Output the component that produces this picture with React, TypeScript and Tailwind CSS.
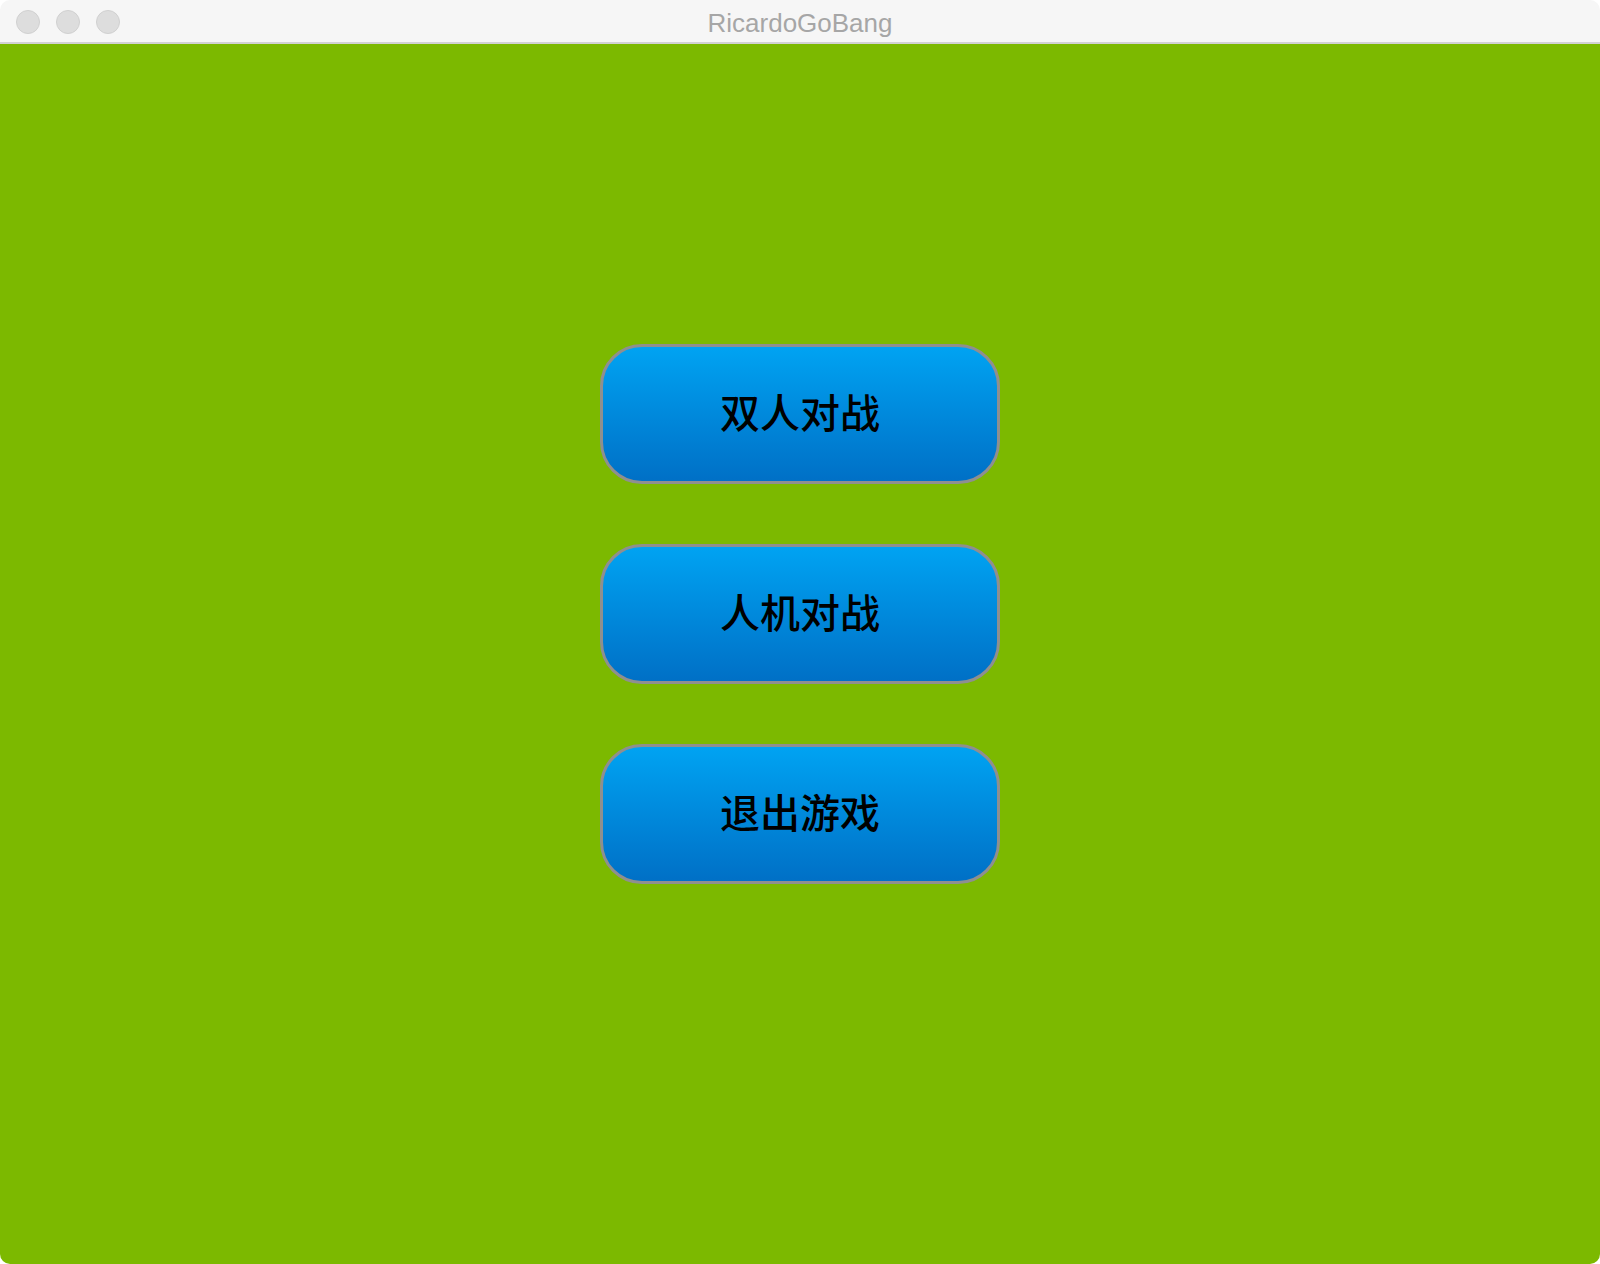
const buttons = ['双人对战', '人机对战', '退出游戏'];

export default function App() {
  return (
    <div className="w-[1600px] h-[1264px] bg-white">
      <div className="flex flex-col h-full rounded-[10px] overflow-hidden">
        {/* title bar */}
        <div className="relative h-[44px] shrink-0 bg-[#f6f6f6] border-b-2 border-[#d2d2d2] flex items-center justify-center">
          <div className="absolute left-[16px] top-[10px] flex gap-[16px]">
            <div className="w-[24px] h-[24px] rounded-full bg-[#dddddd] border border-[#d0d0d0]" />
            <div className="w-[24px] h-[24px] rounded-full bg-[#dddddd] border border-[#d0d0d0]" />
            <div className="w-[24px] h-[24px] rounded-full bg-[#dddddd] border border-[#d0d0d0]" />
          </div>
          <span className="pt-[4px] text-[26px] leading-none text-[#a6a6a6] font-['Liberation_Sans',Arial,sans-serif]">
            RicardoGoBang
          </span>
        </div>

        {/* content */}
        <div className="flex-1 bg-[#7cb900] flex flex-col items-center pt-[300px] gap-[60px]">
          {buttons.map((label) => (
            <button
              key={label}
              className="w-[400px] h-[140px] pb-[6px] rounded-[42px] border-[3px] border-[#8f8f8f] bg-gradient-to-b from-[#00a3f2] to-[#0070c6] flex items-center justify-center text-black text-[40px] leading-none font-medium font-['Noto_Sans_CJK_SC',sans-serif]"
            >
              {label}
            </button>
          ))}
        </div>
      </div>
    </div>
  );
}
